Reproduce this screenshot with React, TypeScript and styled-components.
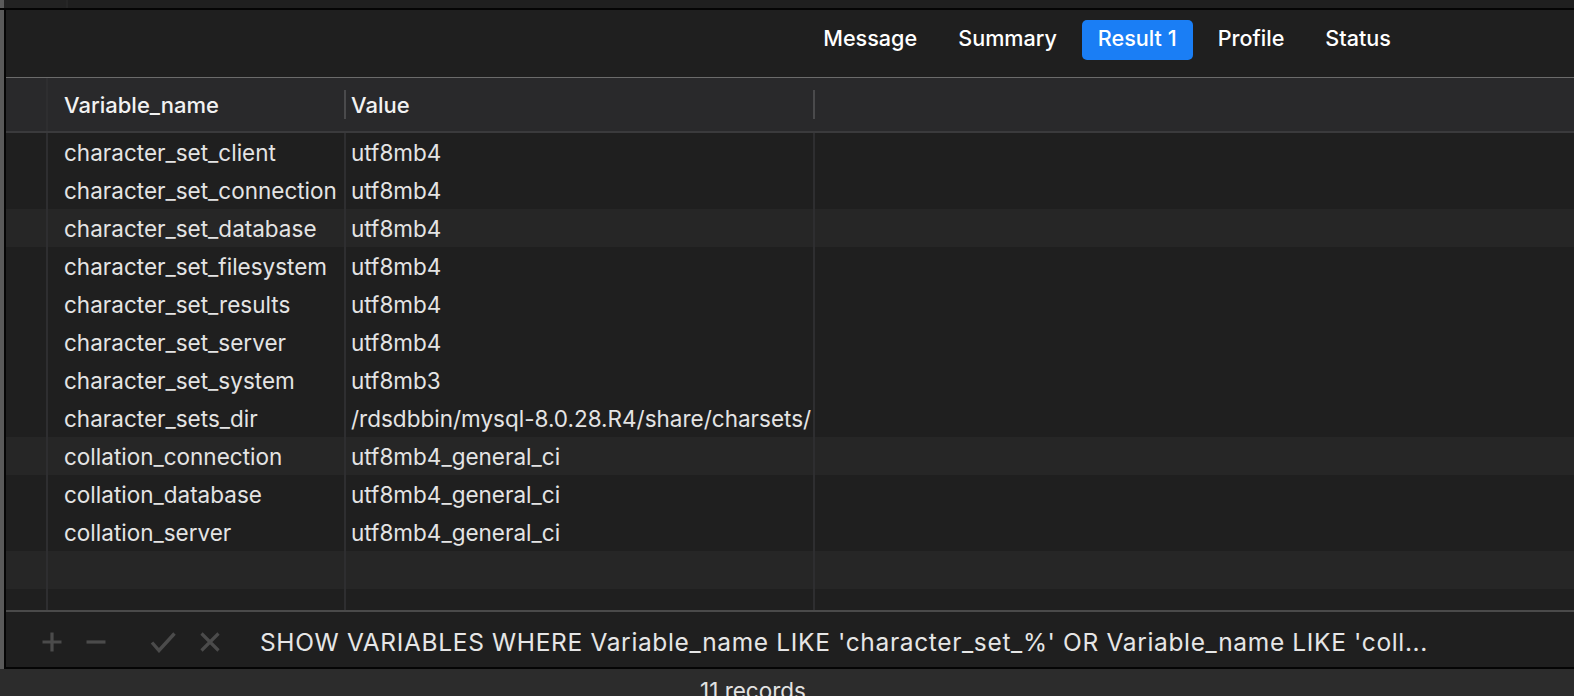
import React from "react";
import styled, { createGlobalStyle } from "styled-components";

const Global = createGlobalStyle`
  html, body { margin: 0; padding: 0; background: #1f1f1f; }
  body { font-family: Inter, "Noto Sans", sans-serif; -webkit-font-smoothing: antialiased; }
  * { box-sizing: border-box; }
`;

const Window = styled.div`
  width: 1574px;
  height: 696px;
  display: flex;
  flex-direction: column;
  background: #1f1f1f;
  overflow: hidden;
`;

const TopStrip = styled.div`
  height: 10px;
  flex: none;
  display: flex;
  border-bottom: 2px solid #050505;
  background: #1f1f1f;
`;

const TopRail = styled.div`
  width: 4px;
  background: #5a5a5a;
`;

const TopPane = styled.div`
  width: 64px;
  border-right: 2px solid #262626;
  background: #222222;
`;

const Body = styled.div`
  flex: 1;
  display: flex;
  min-height: 0;
`;

const Rail = styled.div`
  width: 4px;
  flex: none;
  background: #5a5a5a;
  border-right: 2px solid #050505;
  box-sizing: content-box;
`;

const Pane = styled.div`
  flex: 1;
  display: flex;
  flex-direction: column;
  min-width: 0;
`;

const TabBar = styled.div`
  height: 68px;
  flex: none;
  display: flex;
  align-items: flex-start;
  justify-content: flex-end;
  gap: 9px;
  padding-top: 10px;
  padding-right: 167px;
  background: #1f1f1f;
  border-bottom: 1px solid #6b6b6b;
`;

const Tab = styled.div<{ $active?: boolean }>`
  height: 40px;
  padding: 0 16px 4px;
  display: flex;
  align-items: center;
  border-radius: 5px;
  font-size: 21.6px;
  font-weight: 500;
  color: #ffffff;
  background: ${(p) => (p.$active ? "#1a7ef5" : "transparent")};
`;

const Grid = styled.div`
  flex: 1;
  display: flex;
  flex-direction: column;
  min-height: 0;
  background: #1f1f1f;
`;

const columns = "42px 298px 469px 1fr";

const HeaderRow = styled.div`
  height: 55px;
  flex: none;
  display: grid;
  grid-template-columns: ${columns};
  background: #29292b;
  border-bottom: 2px solid #3a3a3c;
`;

const HeadCell = styled.div<{ $first?: boolean; $sep?: boolean }>`
  display: flex;
  align-items: center;
  padding-left: ${(p) => (p.$first ? "16px" : "5px")};
  font-size: 22px;
  font-weight: 500;
  color: #f2f2f2;
  position: relative;
  &::after {
    content: "";
    display: ${(p) => (p.$sep ? "block" : "none")};
    position: absolute;
    right: 0;
    top: 12px;
    bottom: 12px;
    width: 2px;
    background: #4a4a4c;
  }
`;

const Gutter = styled.div`
  border-right: 2px solid #2e2e30;
`;

const Rows = styled.div`
  flex: 1;
  display: flex;
  flex-direction: column;
`;

const Row = styled.div<{ $alt?: boolean }>`
  height: 38px;
  flex: none;
  display: grid;
  grid-template-columns: ${columns};
  background: ${(p) => (p.$alt ? "#262626" : "transparent")};
`;

const Filler = styled.div`
  flex: 1;
  display: grid;
  grid-template-columns: ${columns};
`;

const Cell = styled.div<{ $first?: boolean }>`
  display: flex;
  align-items: center;
  padding-left: ${(p) => (p.$first ? "16px" : "5px")};
  font-size: 22.5px;
  color: #e4e4e4;
  white-space: nowrap;
  overflow: hidden;
  border-right: 2px solid #2e2e30;
`;

const EmptyCell = styled.div`
  border-right: 2px solid #2e2e30;
`;

const LastCell = styled.div``;

const Toolbar = styled.div`
  height: 59px;
  flex: none;
  display: flex;
  align-items: center;
  padding-left: 36px;
  padding-top: 4px;
  border-top: 2px solid #4a4a4a;
  border-bottom: 2px solid #050505;
  background: #1f1f1f;
`;

const ToolGroup = styled.div<{ $mr: number }>`
  display: flex;
  align-items: center;
  gap: 24px;
  margin-right: ${(p) => p.$mr}px;
`;

const ToolIcon = styled.svg<{ $w: number }>`
  width: ${(p) => p.$w}px;
  height: 22px;
  display: block;
`;

const Sql = styled.div`
  font-size: 24.5px;
  letter-spacing: 0.65px;
  color: #e6e6e6;
  white-space: nowrap;
`;

const StatusBar = styled.div`
  height: 27px;
  flex: none;
  display: flex;
  justify-content: center;
  padding-top: 9px;
  padding-right: 68px;
  background: #2c2c2c;
  font-size: 22.5px;
  color: #e2e2e2;
  line-height: 26px;
  overflow: hidden;
`;

const rows: [string, string][] = [
  ["character_set_client", "utf8mb4"],
  ["character_set_connection", "utf8mb4"],
  ["character_set_database", "utf8mb4"],
  ["character_set_filesystem", "utf8mb4"],
  ["character_set_results", "utf8mb4"],
  ["character_set_server", "utf8mb4"],
  ["character_set_system", "utf8mb3"],
  ["character_sets_dir", "/rdsdbbin/mysql-8.0.28.R4/share/charsets/"],
  ["collation_connection", "utf8mb4_general_ci"],
  ["collation_database", "utf8mb4_general_ci"],
  ["collation_server", "utf8mb4_general_ci"],
];

const altRows = new Set([2, 8]);

const tabs = ["Message", "Summary", "Result 1", "Profile", "Status"];

const iconStroke = "#4b4b4b";

export default function App() {
  return (
    <>
      <Global />
      <Window>
        <TopStrip>
          <TopRail />
          <TopPane />
        </TopStrip>
        <Body>
          <Rail />
          <Pane>
            <TabBar>
              {tabs.map((t) => (
                <Tab key={t} $active={t === "Result 1"}>
                  {t}
                </Tab>
              ))}
            </TabBar>
            <Grid>
              <HeaderRow>
                <Gutter />
                <HeadCell $first $sep>Variable_name</HeadCell>
                <HeadCell $sep>Value</HeadCell>
                <HeadCell />
              </HeaderRow>
              <Rows>
                {rows.map(([n, v], i) => (
                  <Row key={n} $alt={altRows.has(i)}>
                    <Gutter />
                    <Cell $first>{n}</Cell>
                    <Cell>{v}</Cell>
                    <LastCell />
                  </Row>
                ))}
                <Row $alt>
                  <Gutter />
                  <EmptyCell />
                  <EmptyCell />
                  <LastCell />
                </Row>
                <Filler>
                  <Gutter />
                  <EmptyCell />
                  <EmptyCell />
                  <LastCell />
                </Filler>
              </Rows>
            </Grid>
            <Toolbar>
              <ToolGroup $mr={44}>
                <ToolIcon $w={20} viewBox="0 0 20 22">
                  <path d="M10 1.5v19M0.5 11h19" stroke={iconStroke} strokeWidth="3.2" />
                </ToolIcon>
                <ToolIcon $w={20} viewBox="0 0 20 22">
                  <path d="M0.5 11h19" stroke={iconStroke} strokeWidth="3.2" />
                </ToolIcon>
              </ToolGroup>
              <ToolGroup $mr={40}>
                <ToolIcon $w={26} viewBox="0 0 26 22">
                  <path d="M2 11.5l7 8L24.5 2.5" stroke={iconStroke} strokeWidth="3.4" fill="none" />
                </ToolIcon>
                <ToolIcon $w={20} viewBox="0 0 20 22">
                  <path d="M1.5 2.5l17 17M18.5 2.5l-17 17" stroke={iconStroke} strokeWidth="3.2" />
                </ToolIcon>
              </ToolGroup>
              <Sql>
                SHOW VARIABLES WHERE Variable_name LIKE 'character_set_%' OR Variable_name LIKE 'coll...
              </Sql>
            </Toolbar>
          </Pane>
        </Body>
        <StatusBar>11 records</StatusBar>
      </Window>
    </>
  );
}
